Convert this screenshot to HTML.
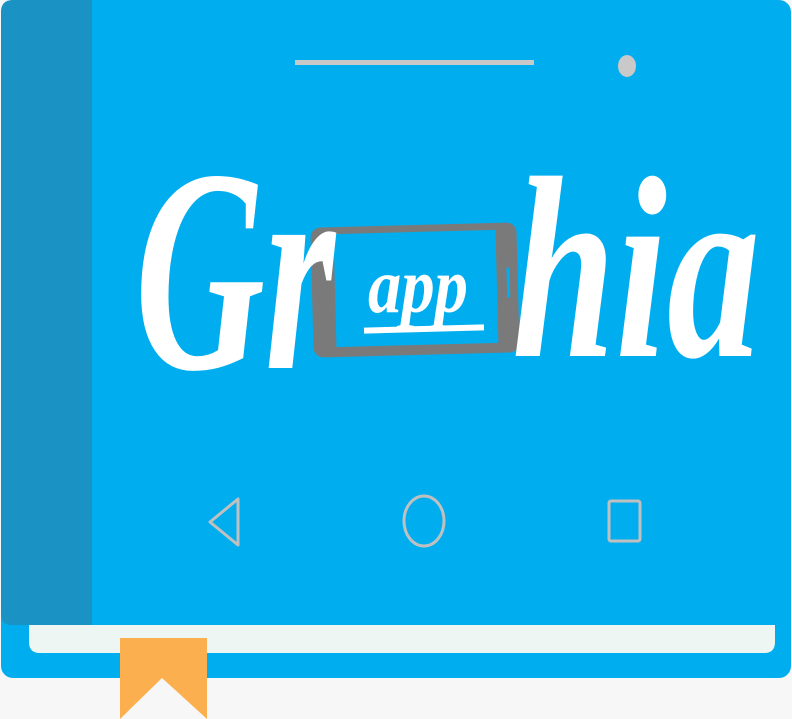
<!DOCTYPE html>
<html><head><style>
html,body{margin:0;padding:0;background:#f7f7f7;}
</style></head><body>
<svg width="792" height="719" viewBox="0 0 792 719" xmlns="http://www.w3.org/2000/svg" style="display:block">
<rect x="0" y="0" width="792" height="719" fill="#f7f7f7"/>
<rect x="1" y="0" width="790" height="678" rx="12" fill="#00aeef"/>
<path d="M1 12 Q1 0 13 0 L92 0 L92 625 L12 625 Q1 625 1 614 Z" fill="#1a93c4"/>
<path d="M29 625 L775 625 L775 642 Q775 653 764 653 L40 653 Q29 653 29 642 Z" fill="#eef6f3"/>
<path d="M120 638 L207 638 L207 719 L162 678 L120 719 Z" fill="#fbaf4f"/>
<rect x="295" y="60" width="239" height="5" fill="#c9c9c9"/>
<ellipse cx="627" cy="66" rx="9" ry="11" fill="#c9c9c9"/>
<path d="M238 499 L238 545 L210 522 Z" fill="none" stroke="#c0c0c0" stroke-width="3" stroke-linejoin="round"/>
<ellipse cx="424" cy="521" rx="20" ry="25" fill="none" stroke="#c0c0c0" stroke-width="3"/>
<rect x="609" y="501" width="31" height="40" rx="2" fill="none" stroke="#c0c0c0" stroke-width="3"/>
<g transform="rotate(-1.5 415 290)">
<rect x="312" y="225" width="206" height="130" rx="10" fill="#7a7a7a"/>
<rect x="335" y="232" width="162" height="113" fill="#00aeef"/>
<rect x="507" y="270" width="3" height="30" fill="#00aeef"/>
</g>
<text x="368" y="312" font-family="Liberation Serif, serif" font-style="italic" font-weight="bold" font-size="78" fill="#fff" textLength="100" lengthAdjust="spacingAndGlyphs">app</text>
<rect x="364" y="326" width="120" height="6" fill="#fff" transform="rotate(-1.5 424 329)"/>
<text x="135" y="368" font-family="Liberation Serif, serif" font-style="italic" font-weight="bold" font-size="290" fill="#fff" textLength="200" lengthAdjust="spacingAndGlyphs">Gr</text>
<text x="512" y="356" font-family="Liberation Serif, serif" font-style="italic" font-weight="bold" font-size="260" fill="#fff" textLength="248" lengthAdjust="spacingAndGlyphs">hia</text>
</svg>
</body></html>
